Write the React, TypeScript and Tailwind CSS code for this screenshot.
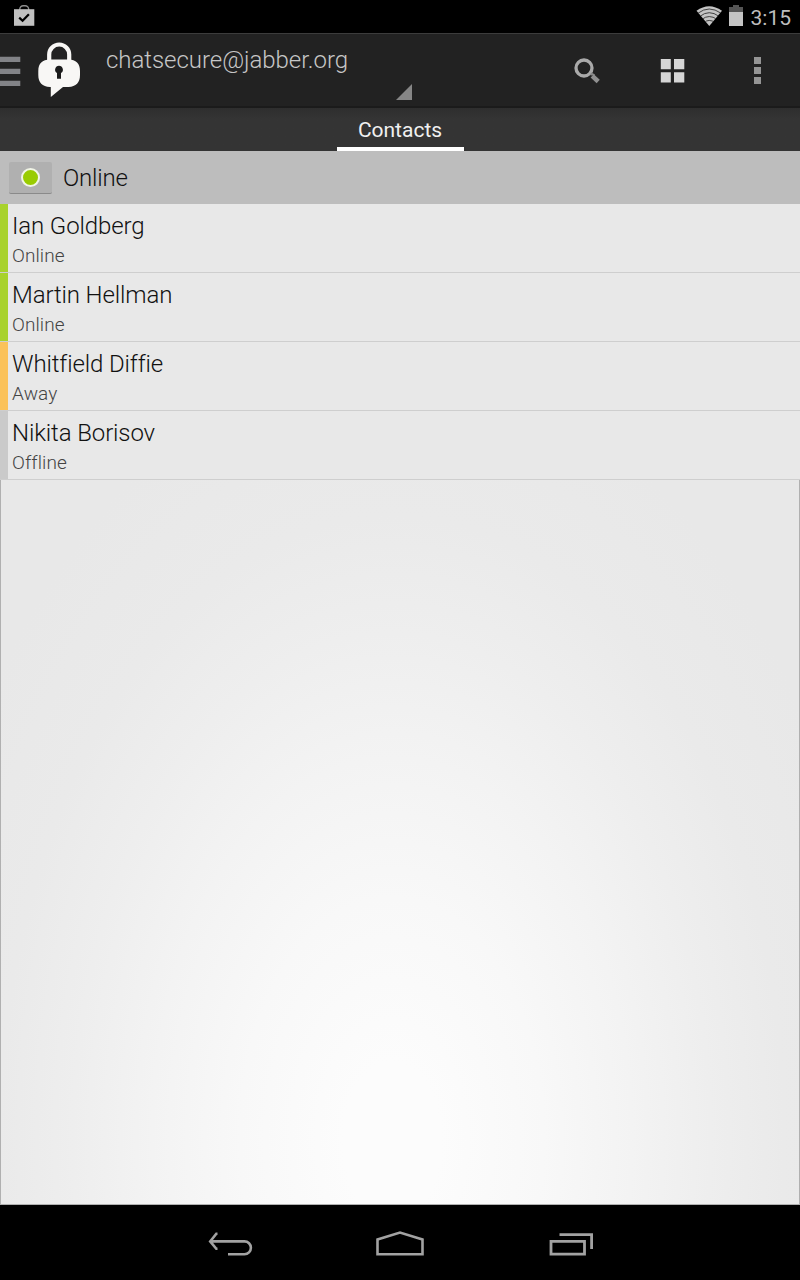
type Contact = { name: string; status: string; bar: string };

const contacts: Contact[] = [
  { name: 'Ian Goldberg', status: 'Online', bar: 'bg-[#a8d22c]' },
  { name: 'Martin Hellman', status: 'Online', bar: 'bg-[#a8d22c]' },
  { name: 'Whitfield Diffie', status: 'Away', bar: 'bg-[#fbc259]' },
  { name: 'Nikita Borisov', status: 'Offline', bar: 'bg-[#cacaca]' },
];

function StatusBar() {
  return (
    <header className="flex h-[33px] shrink-0 items-start justify-between bg-black pl-3.5 pr-[9px]">
      <svg className="mt-[5px]" width="21" height="22" viewBox="0 0 21 22">
        <path d="M5.7 5V4.4a3.6 3.6 0 0 1 3.6-3.6h1.8a3.6 3.6 0 0 1 3.6 3.6V5" fill="none" stroke="#8d8d8d" strokeWidth="1.4" />
        <path d="M0 4.2h20.3v16.6H0z" fill="#c1c1c1" />
        <path d="M5.2 12.6l3.4 3.2 6.3-6.6" fill="none" stroke="#000" strokeWidth="2.2" />
      </svg>
      <div className="flex items-start">
        <svg className="mt-[6px]" width="27" height="20" viewBox="0 0 27 20">
          <defs>
            <clipPath id="fan"><path d="M0.5 4.8Q13 -4.2 26 4.8L13.3 20z" /></clipPath>
          </defs>
          <path d="M0.5 4.8Q13 -4.2 26 4.8L13.3 20z" fill="#c4c4c4" />
          <g clipPath="url(#fan)" fill="none" stroke="#333" strokeWidth="0.9">
            <path d="M2 7.2Q13 -1.2 25 7.2" />
            <path d="M4 10.300Q13 3.100 23 10.300" />
            <path d="M6 13.300Q13 7.800 21 13.300" />
            <path d="M8 16.400Q13 12.500 19 16.400" />
          </g>
        </svg>
        <svg className="ml-1.5 mt-[5px]" width="14" height="21" viewBox="0 0 14 21">
          <path d="M4 0h6v2h4v6H0V2h4z" fill="#555" />
          <path d="M0 7h14v14H0z" fill="#c4c4c4" />
        </svg>
        <span className="ml-2 mt-[5px] text-[21px] leading-[26px] text-[#bebebe]">3:15</span>
      </div>
    </header>
  );
}

function ActionBar() {
  return (
    <div className="flex h-[75px] shrink-0 border-b-2 border-t border-b-[#1b1b1b] border-t-[#3c3c3c] bg-[#222222]">
      <svg className="mt-[22px] shrink-0" width="21" height="31" viewBox="0 0 21 31">
        <path d="M0 .7h20.3v5.3H0zM0 12.7h20.3V18H0zM0 24.7h20.3V30H0z" fill="#828387" />
      </svg>
      <svg className="ml-4 mt-[6px] shrink-0" width="45" height="60" viewBox="0 0 45 60">
        <g transform="translate(1 1)">
          <path d="M11.200 20V13.500a10 10 0 0 1 20 0V20" fill="none" stroke="#f8f7f5" strokeWidth="4.200" />
          <path d="M12 18.500h18.500C38 18.500 42 22.500 42 30v4c0 7.500-4 11.500-11.500 12H25L12.800 56V46H12C4.300 45.500.300 41.500.300 34v-4C.300 22.500 4.300 18.500 12 18.500z" fill="#f8f7f5" />
          <path d="M21 24.700a4 4 0 0 1 2 7.400v5.600h-4v-5.600a4 4 0 0 1 2-7.400z" fill="#1c1c1c" />
        </g>
      </svg>
      <div className="ml-6 flex w-[306px] flex-col">
        <span className="mt-3 whitespace-nowrap text-[24px] font-light leading-7 tracking-[-0.04px] text-[#c7c7c7]">chatsecure@jabber.org</span>
        <svg className="ml-[290px] mt-[10px]" width="16" height="16" viewBox="0 0 16 16">
          <path d="M16 0v16H0z" fill="#868686" />
        </svg>
      </div>
      <svg className="ml-[162px] mt-6 shrink-0" width="27" height="27" viewBox="0 0 27 27">
        <circle cx="10" cy="10" r="8" fill="none" stroke="#aaa" strokeWidth="3.300" />
        <path d="M16.500 17l1.300-1.200 2.700 1.500" fill="none" stroke="#888" strokeWidth="2" />
        <path d="M18.200 17.800l6 5.700" stroke="#909090" strokeWidth="4.600" />
      </svg>
      <svg className="ml-[59px] mt-[25px] shrink-0" width="25" height="24" viewBox="0 0 25 24">
        <path d="M.8 0h10v10.300h-10zM14 0h10.300v10.300H14zM.8 13.300h10v10.300h-10zM14 13.300h10.300v10.300H14z" fill="#d6d6d6" />
      </svg>
      <svg className="ml-[69px] mt-[23px] shrink-0" width="7" height="27" viewBox="0 0 7 27">
        <path d="M0 0h7v7H0zM0 10h7v7H0zM0 20h7v7H0z" fill="#959595" />
      </svg>
    </div>
  );
}

function NavBar() {
  return (
    <nav className="flex h-[75px] shrink-0 bg-black pl-[208px] pt-[25px]">
      <svg width="45" height="32" viewBox="0 0 45 32" fill="none" stroke="#a2a2a2" strokeWidth="2.600">
        <path d="M9.500 3.700H8.300L2.200 11.400l6.100 7.400h1.200M2 11.400h34.500a6.400 6.400 0 0 1 0 12.800H20" />
      </svg>
      <svg className="ml-[123px]" width="48" height="32" viewBox="0 0 48 32">
        <path d="M1.500 24.200V9.400L24 2.500 46.500 9.400v14.800z" fill="none" stroke="#a2a2a2" strokeWidth="2.600" />
      </svg>
      <svg className="ml-[125px]" width="45" height="32" viewBox="0 0 45 32" fill="none" stroke="#a2a2a2" strokeWidth="2.800">
        <path d="M2 11.400h33.500v12.800H2zM10.500 4.600h32.100v14.300" />
      </svg>
    </nav>
  );
}

export default function App() {
  return (
    <div className="flex h-[1280px] w-[800px] flex-col overflow-hidden bg-black font-['Roboto',sans-serif]">
      <StatusBar />
      <ActionBar />
      <div className="flex h-[43px] shrink-0 justify-center bg-linear-to-b from-[#2e2e2e] to-[#343434] to-25%">
        <div className="flex w-[127px] justify-center border-b-4 border-white pt-2">
          <span className="text-[21px] leading-7 text-[#f0f0f0]">Contacts</span>
        </div>
      </div>
      <main className="flex min-h-0 flex-1 flex-col border-x border-b border-[#b0b0b0] bg-[radial-gradient(ellipse_490px_780px_at_391px_989px,#fcfcfc_0%,#fcfcfc_10%,#f8f8f8_31%,#f3f3f3_49%,#eeeeee_65%,#eaeaea_80%,#e8e8e8_100%)]">
        <div className="-mx-px flex h-[53px] shrink-0 items-center bg-[#bdbdbd] pl-[9px]">
          <div className="flex h-8 w-[43px] items-center justify-center rounded-[2px] border-b border-[#8a8a8a] bg-[#b0b0b0]">
            <div className="size-[19px] rounded-full border-2 border-[#f1f5e6] bg-[#99cc00]" />
          </div>
          <span className="ml-[11px] text-[24px] font-light leading-7 tracking-[-0.2px] text-[#111]">Online</span>
        </div>
        <ul className="-mx-px">
          {contacts.map((c) => (
            <li key={c.name} className="flex h-[69px] border-b border-[#cecece] bg-[#e8e8e8]">
              <div className={`w-2 ${c.bar}`} />
              <div className="flex flex-col pl-1 pt-2">
                <span className="text-[24px] font-light leading-7 tracking-[-0.12px] text-[#111] [font-variant-ligatures:common-ligatures]">{c.name}</span>
                <span className="mt-1 text-[19px] font-light leading-6 tracking-[0.08px] text-[#444] [font-variant-ligatures:common-ligatures]">{c.status}</span>
              </div>
            </li>
          ))}
        </ul>
      </main>
      <NavBar />
    </div>
  );
}
